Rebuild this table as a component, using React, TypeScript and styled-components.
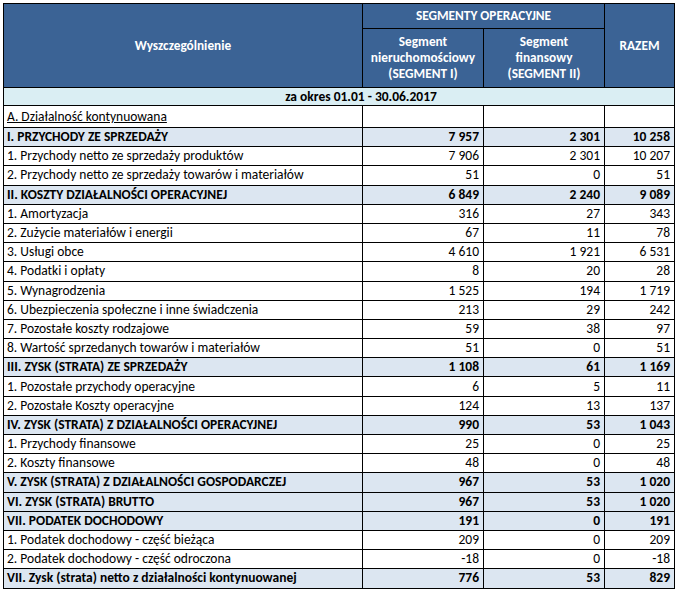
import React from "react";
import styled, { createGlobalStyle } from "styled-components";

const Global = createGlobalStyle`
  html, body { margin: 0; padding: 0; background: #ffffff; }
  body { font-family: Carlito, Lato, "Liberation Sans", sans-serif; }
`;

const Page = styled.div`
  padding: 3px 0 0 3px;
`;

const Table = styled.table`
  border-collapse: collapse;
  table-layout: fixed;
  width: 671px;
  font-size: 13.5px;
  color: #000;
`;

const HeadCell = styled.th<{ $h?: number }>`
  background: #3b6395;
  color: #ffffff;
  font-weight: 700;
  font-size: 13.3px;
  text-align: center;
  vertical-align: middle;
  border: 1px solid #000;
  padding: 0 4px;
  line-height: 16px;
  height: ${(p) => (p.$h ? `${p.$h}px` : "auto")};
`;

const DateCell = styled.td`
  background: #daeef3;
  border: 1px solid #000;
  text-align: center;
  font-weight: 700;
  height: 17px;
  line-height: 14px;
  padding: 0 0 0 44px;
`;

const Row = styled.tr<{ $h?: number }>`
  height: ${(p) => p.$h ?? 19.2}px;
`;

const Cell = styled.td<{ $bold?: boolean; $num?: boolean }>`
  border: 1px solid #000;
  background: ${(p) => (p.$bold ? "#dce6f1" : "#ffffff")};
  font-weight: ${(p) => (p.$bold ? 700 : 400)};
  text-align: ${(p) => (p.$num ? "right" : "left")};
  padding: 0 ${(p) => (p.$num ? "4px" : "3px")};
  white-space: nowrap;
  overflow: hidden;
  line-height: 14px;
`;

const SectionLabel = styled.span`
  text-decoration: underline;
`;

type R = [string, string, string, string, boolean];

const rows: R[] = [
  ["I. PRZYCHODY ZE SPRZEDAŻY", "7 957", "2 301", "10 258", true],
  ["1. Przychody netto ze sprzedaży produktów", "7 906", "2 301", "10 207", false],
  ["2. Przychody netto ze sprzedaży towarów i materiałów", "51", "0", "51", false],
  ["II. KOSZTY DZIAŁALNOŚCI OPERACYJNEJ", "6 849", "2 240", "9 089", true],
  ["1. Amortyzacja", "316", "27", "343", false],
  ["2. Zużycie materiałów i energii", "67", "11", "78", false],
  ["3. Usługi obce", "4 610", "1 921", "6 531", false],
  ["4. Podatki i opłaty", "8", "20", "28", false],
  ["5. Wynagrodzenia", "1 525", "194", "1 719", false],
  ["6. Ubezpieczenia społeczne i inne świadczenia", "213", "29", "242", false],
  ["7. Pozostałe koszty rodzajowe", "59", "38", "97", false],
  ["8. Wartość sprzedanych towarów i materiałów", "51", "0", "51", false],
  ["III. ZYSK (STRATA) ZE SPRZEDAŻY", "1 108", "61", "1 169", true],
  ["1. Pozostałe przychody operacyjne", "6", "5", "11", false],
  ["2. Pozostałe Koszty operacyjne", "124", "13", "137", false],
  ["IV. ZYSK (STRATA) Z DZIAŁALNOŚCI OPERACYJNEJ", "990", "53", "1 043", true],
  ["1. Przychody finansowe", "25", "0", "25", false],
  ["2. Koszty finansowe", "48", "0", "48", false],
  ["V. ZYSK (STRATA) Z DZIAŁALNOŚCI GOSPODARCZEJ", "967", "53", "1 020", true],
  ["VI. ZYSK (STRATA) BRUTTO", "967", "53", "1 020", true],
  ["VII. PODATEK DOCHODOWY", "191", "0", "191", true],
  ["1. Podatek dochodowy - część bieżąca", "209", "0", "209", false],
  ["2. Podatek dochodowy - część odroczona", "-18", "0", "-18", false],
  ["VII. Zysk (strata) netto z działalności kontynuowanej", "776", "53", "829", true],
];

export default function App() {
  return (
    <Page>
      <Global />
      <Table>
        <colgroup>
          <col style={{ width: 359 }} />
          <col style={{ width: 121 }} />
          <col style={{ width: 121 }} />
          <col style={{ width: 70 }} />
        </colgroup>
        <thead>
          <tr>
            <HeadCell rowSpan={2}>Wyszczególnienie</HeadCell>
            <HeadCell colSpan={2} $h={24}>SEGMENTY OPERACYJNE</HeadCell>
            <HeadCell rowSpan={2}>RAZEM</HeadCell>
          </tr>
          <tr>
            <HeadCell $h={58}>
              Segment
              <br />
              nieruchomościowy
              <br />
              (SEGMENT I)
            </HeadCell>
            <HeadCell $h={58}>
              Segment
              <br />
              finansowy
              <br />
              (SEGMENT II)
            </HeadCell>
          </tr>
        </thead>
        <tbody>
          <tr>
            <DateCell colSpan={4}>za okres 01.01 - 30.06.2017</DateCell>
          </tr>
          <Row $h={22}>
            <Cell>
              <SectionLabel>A. Działalność kontynuowana</SectionLabel>
            </Cell>
            <Cell $num />
            <Cell $num />
            <Cell $num />
          </Row>
          {rows.map(([label, a, b, c, bold], i) => (
            <Row key={i}>
              <Cell $bold={bold}>{label}</Cell>
              <Cell $bold={bold} $num>{a}</Cell>
              <Cell $bold={bold} $num>{b}</Cell>
              <Cell $bold={bold} $num>{c}</Cell>
            </Row>
          ))}
        </tbody>
      </Table>
    </Page>
  );
}
